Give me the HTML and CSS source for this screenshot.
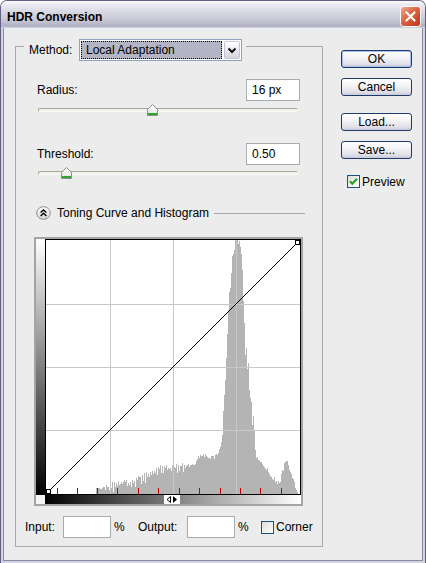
FILE: index.html
```html
<!DOCTYPE html>
<html>
<head>
<meta charset="utf-8">
<title>HDR Conversion</title>
<link rel="stylesheet" href="styles.css">
</head>
<body>
<div class="window">
  <div class="titlebar">
    <span class="title">HDR Conversion</span>
    <span class="close">
      <svg width="21" height="21" viewBox="0 0 21 21">
        <defs>
          <linearGradient id="closeGrad" x1="0" y1="0" x2="1" y2="1">
            <stop offset="0" stop-color="#eeae98"/>
            <stop offset="0.45" stop-color="#dd6443"/>
            <stop offset="1" stop-color="#b9321a"/>
          </linearGradient>
        </defs>
        <rect x="0.5" y="0.5" width="20" height="20" rx="3" fill="url(#closeGrad)" stroke="#fff"/>
        <path d="M6.5 6.5L14.5 14.5M14.5 6.5L6.5 14.5" stroke="#fff" stroke-width="2.2" stroke-linecap="round"/>
      </svg>
    </span>
  </div>
  <div class="client">
    <div class="group">
      <div class="legend">
        <span class="legend-label">Method:</span>
        <div class="select">
          <span class="select-value">Local Adaptation</span>
          <span class="select-btn">
            <svg width="14" height="18" viewBox="0 0 14 18"><path d="M3.5 7.5L7 11L10.5 7.5" fill="none" stroke="#111" stroke-width="2"/></svg>
          </span>
        </div>
      </div>

      <div class="field-row row-radius">
        <span>Radius:</span>
        <input class="num" type="text" value="16 px" readonly>
      </div>
      <div class="slider slider-radius">
        <div class="track"></div>
        <span class="thumb" style="left:109px">
          <svg width="11" height="12" viewBox="0 0 11 12">
            <defs>
              <linearGradient id="thumbGrad" x1="0" y1="0" x2="0" y2="1">
                <stop offset="0" stop-color="#ffffff"/>
                <stop offset="1" stop-color="#e2e2de"/>
              </linearGradient>
            </defs>
            <path d="M5.5 0.5L10.5 5.5V11.5H0.5V5.5Z" fill="url(#thumbGrad)" stroke="#8b8f94"/>
            <rect x="1" y="9" width="9" height="2" fill="#2ea32e"/>
          </svg>
        </span>
      </div>

      <div class="field-row row-threshold">
        <span>Threshold:</span>
        <input class="num" type="text" value="0.50" readonly>
      </div>
      <div class="slider slider-threshold">
        <div class="track"></div>
        <span class="thumb" style="left:23px">
          <svg width="11" height="12" viewBox="0 0 11 12">
            <path d="M5.5 0.5L10.5 5.5V11.5H0.5V5.5Z" fill="url(#thumbGrad)" stroke="#8b8f94"/>
            <rect x="1" y="9" width="9" height="2" fill="#2ea32e"/>
          </svg>
        </span>
      </div>

      <div class="section">
        <svg class="section-icon" width="15" height="14" viewBox="0 0 15 14">
          <defs>
            <linearGradient id="iconGrad" x1="0" y1="0" x2="0" y2="1">
              <stop offset="0" stop-color="#ffffff"/>
              <stop offset="1" stop-color="#d6d6d6"/>
            </linearGradient>
          </defs>
          <ellipse cx="7.5" cy="7" rx="6.8" ry="6.3" fill="url(#iconGrad)" stroke="#8c8c8c"/>
          <path d="M4.6 6.6L7.5 3.9L10.4 6.6M4.6 10L7.5 7.3L10.4 10" fill="none" stroke="#000" stroke-width="1.4"/>
        </svg>
        <span class="section-title">Toning Curve and Histogram</span>
        <span class="rule"></span>
      </div>

      <div class="histo">
        <div class="vstrip"></div>
        <svg id="graph" class="graph" width="256" height="256" viewBox="0 0 256 256">
          <rect width="256" height="256" fill="#fff"/>
          <g id="hist" fill="#b4b4b4" shape-rendering="crispEdges"></g>
          <path d="M65.5 1V255M128.5 1V255M191.5 1V255M1 65.5H255M1 128.5H255M1 191.5H255" stroke="#c8c8c8" fill="none" shape-rendering="crispEdges"/>
          <line x1="1.5" y1="254.5" x2="254.5" y2="1.5" stroke="#000" shape-rendering="crispEdges"/>
          <path d="M12.5 249V255M32.5 249V255M52.5 249V255M72.5 249V255M93.5 249V255M113.5 249V255M134.5 249V255M154.5 249V255M175.5 249V255M195.5 249V255M215.5 249V255M236.5 249V255" stroke="#c00000" fill="none" shape-rendering="crispEdges"/>
          <rect x="0.5" y="0.5" width="255" height="255" fill="none" stroke="#000" shape-rendering="crispEdges"/>
          <rect x="1.5" y="250.5" width="4" height="4" fill="#fff" stroke="#000" shape-rendering="crispEdges"/>
          <rect x="250.5" y="1.5" width="4" height="4" fill="#fff" stroke="#000" shape-rendering="crispEdges"/>
        </svg>
        <div class="corner"></div>
        <div class="hstrip">
          <span class="marker">
            <svg width="16" height="9" viewBox="0 0 16 9">
              <path d="M6.5 1.5L3 4.5L6.5 7.5Z" fill="#fff" stroke="#000"/>
              <path d="M9 1L13 4.5L9 8Z" fill="#000"/>
            </svg>
          </span>
        </div>
      </div>

      <div class="io-row">
        <span>Input:</span>
        <span class="io-box"></span>
        <span class="pct">%</span>
        <span>Output:</span>
        <span class="io-box"></span>
        <span class="pct">%</span>
        <span class="checkbox"></span>
        <span>Corner</span>
      </div>
    </div>

    <div class="buttons">
      <button class="btn btn-default">OK</button>
      <button class="btn btn-cancel">Cancel</button>
      <button class="btn btn-load">Load...</button>
      <button class="btn btn-save">Save...</button>
      <div class="preview">
        <span class="checkbox">
          <svg width="11" height="11" viewBox="0 0 11 11"><path d="M2 5.3L4.3 7.8L9 2.8" fill="none" stroke="#21a121" stroke-width="2"/></svg>
        </span>
        <span>Preview</span>
      </div>
    </div>
  </div>
</div>
<script src="script.js"></script>
</body>
</html>
```

FILE: styles.css
```css
* {
  box-sizing: border-box;
}

html,
body {
  margin: 0;
  padding: 0;
}

body {
  width: 426px;
  height: 563px;
  overflow: hidden;
  background: #ffffff;
  font-family: "Liberation Sans", Arial, sans-serif;
  font-size: 12px;
  color: #000;
}

.window {
  width: 426px;
  height: 563px;
  display: flex;
  flex-direction: column;
  border: 1px solid #606082;
  border-bottom: none;
  border-radius: 7px 7px 0 0;
  overflow: hidden;
  background: #ececec;
}

.titlebar {
  flex: none;
  height: 27px;
  display: flex;
  align-items: center;
  justify-content: space-between;
  padding: 4px 4px 0 6px;
  background: linear-gradient(to bottom, #fbfbfd 0%, #ebebf1 12%, #dcdce6 35%, #cdcddb 60%, #bcbccd 82%, #adadc1 93%, #d8d8e2 100%);
}

.title {
  font-weight: bold;
  font-size: 12px;
  color: #000;
}

.close {
  display: flex;
  width: 21px;
  height: 21px;
}

.client {
  flex: 1;
  display: flex;
  align-items: flex-start;
  border: solid #d2d2e0;
  border-width: 0 2px 2px 2px;
  box-shadow: inset 1px 0 #8a8aa6, inset -1px 0 #8a8aa6, inset 0 -1px #8a8aa6;
}

/* Group box */
.group {
  width: 308px;
  margin: 18px 0 0 12px;
  border: 1px solid #a9a9a9;
  padding-bottom: 8px;
  display: flex;
  flex-direction: column;
  align-items: flex-start;
}

.legend {
  margin: -8px 0 0 8px;
  padding: 0 4px 0 5px;
  height: 22px;
  display: flex;
  align-items: center;
  background: #ececec;
}

.legend-label {
  width: 50px;
}

.select {
  width: 163px;
  height: 22px;
  border: 1px solid #8ea2c2;
  background: #fff;
  padding: 1px;
  display: flex;
  gap: 2px;
}

.select-value {
  flex: 1;
  background: #b3b5c4;
  border: 1px dotted #000;
  padding-left: 4px;
  display: flex;
  align-items: center;
}

.select-btn {
  width: 16px;
  display: flex;
  align-items: center;
  justify-content: center;
  border: 1px solid #c4c4d2;
  border-radius: 2px;
  background: linear-gradient(#ffffff, #e6e6ec 60%, #d2d2dc);
}

.field-row {
  width: 100%;
  height: 22px;
  display: flex;
  justify-content: space-between;
  align-items: center;
  padding: 0 22px 0 21px;
}

.row-radius {
  margin-top: 18px;
}

.row-threshold {
  margin-top: 27px;
}

.num {
  width: 54px;
  height: 22px;
  margin: 0;
  border: 1px solid #a5acb2;
  padding: 0 0 0 5px;
  font: inherit;
  color: #000;
  background: #fff;
  outline: none;
}

.slider {
  position: relative;
  width: 260px;
  height: 12px;
  margin-left: 22px;
  display: flex;
  align-items: center;
}

.slider-radius {
  margin-top: 3px;
}

.slider-threshold {
  margin-top: 2px;
}

.track {
  width: 100%;
  height: 4px;
  border-radius: 2px;
  background: #f2f1ea;
  border: 1px solid;
  border-color: #a6a49b #f8f8f4 #f8f8f4 #a6a49b;
}

.thumb {
  position: absolute;
  top: 0;
  width: 11px;
  height: 12px;
  display: flex;
}

/* Section header */
.section {
  width: 269px;
  height: 14px;
  margin: 27px 0 0 20px;
  display: flex;
  align-items: center;
}

.section-icon {
  flex: none;
}

.section-title {
  margin-left: 6px;
  white-space: nowrap;
}

.rule {
  flex: 1;
  height: 1px;
  margin-left: 5px;
  background: #a6a6a6;
}

/* Histogram */
.histo {
  margin: 17px 0 0 18px;
  border: 2px solid #a4a4a4;
  display: grid;
  grid-template-columns: 9px 256px;
  grid-template-rows: 256px 9px;
}

.vstrip {
  background: linear-gradient(#ffffff, #000000);
}

.graph {
  display: block;
}

.corner {
  background: #f4f4f4;
}

.hstrip {
  position: relative;
  background: linear-gradient(90deg, #000000, #ffffff);
}

.marker {
  position: absolute;
  left: 119px;
  top: 0;
  width: 16px;
  height: 9px;
  background: #fff;
  display: flex;
}

/* Input / Output row */
.io-row {
  margin: 10px 0 0 9px;
  height: 22px;
  display: grid;
  grid-template-columns: 38px 48px 27px 49px 48px 26px 15px auto;
  align-items: center;
}

.io-box {
  width: 48px;
  height: 22px;
  border: 1px solid #a5acb2;
  background: #fff;
}

.pct {
  padding-left: 3px;
}

.checkbox {
  width: 13px;
  height: 13px;
  border: 1px solid #1c5180;
  background: linear-gradient(135deg, #dcdcd7, #ffffff);
  display: flex;
  align-items: center;
  justify-content: center;
}

/* Buttons */
.buttons {
  width: 71px;
  margin: 22px 0 0 18px;
  display: flex;
  flex-direction: column;
}

.btn {
  width: 71px;
  height: 18px;
  margin: 0;
  padding: 0;
  border: 1px solid #1e3a6a;
  border-radius: 3px;
  background: linear-gradient(#ffffff, #f4f4f7 40%, #e0e0e9 80%, #c9c9d8);
  font: inherit;
  color: #000;
  display: flex;
  align-items: center;
  justify-content: center;
}

.btn-default {
  box-shadow: inset 0 0 0 1px #a9bfec;
}

.btn-cancel {
  margin-top: 10px;
}

.btn-load {
  margin-top: 17px;
}

.btn-save {
  margin-top: 10px;
}

.preview {
  margin: 16px 0 0 6px;
  height: 13px;
  display: flex;
  align-items: center;
  gap: 2px;
}
```

FILE: script.js
```js
(function () {
  var g = document.getElementById('hist');
  var NS = 'http://www.w3.org/2000/svg';
  // histogram profile in window pixels: [x, top y]
  var pts = [
    [93, 494], [95, 490], [100, 487], [110, 485], [117, 483], [125, 481], [133, 480],
    [140, 477], [150, 473], [157, 468], [165, 467], [173, 466], [187, 466], [193, 463],
    [197, 460], [200, 455], [205, 455], [210, 457], [213, 458], [217, 455], [219, 450],
    [221, 440], [222, 432], [223, 420], [224, 405], [225, 380], [226, 350], [227, 335],
    [229, 300], [231, 265], [233, 255], [235, 245], [236, 241], [240, 241], [241, 252],
    [242, 268], [243, 300], [244, 330], [245, 346], [247, 362], [248, 372], [250, 393],
    [252, 415], [253, 425], [254, 440], [255, 452], [256, 458], [258, 460], [260, 463],
    [263, 466], [267, 470], [270, 475], [273, 478], [277, 482], [280, 481], [281, 476],
    [282, 472], [284, 465], [286, 460], [287, 461], [288, 466], [290, 471], [292, 477],
    [294, 484], [296, 490], [297, 494]
  ];
  function base(x) {
    for (var i = 0; i < pts.length - 1; i++) {
      var a = pts[i], b = pts[i + 1];
      if (x >= a[0] && x <= b[0]) {
        var t = (x - a[0]) / (b[0] - a[0]);
        return a[1] + (b[1] - a[1]) * t;
      }
    }
    return 494;
  }
  function rnd(i) {
    var s = Math.sin(i * 127.1 + 311.7) * 43758.5453;
    return s - Math.floor(s);
  }
  for (var x = 93; x <= 297; x++) {
    var y = base(x);
    var amp = 5;
    if (x >= 222 && x <= 255) amp = 22;
    else if (x < 200) amp = 6;
    y += (rnd(x) - 0.5) * amp;
    if (x < 185 && x % 2 === 1) y += 2 + rnd(x + 1000) * 4;
    var top = Math.round(y - 239);
    if (top < 1) top = 1;
    if (top >= 255) continue;
    var r = document.createElementNS(NS, 'rect');
    r.setAttribute('x', x - 45);
    r.setAttribute('y', top);
    r.setAttribute('width', 1);
    r.setAttribute('height', 255 - top);
    g.appendChild(r);
  }
})();
```
